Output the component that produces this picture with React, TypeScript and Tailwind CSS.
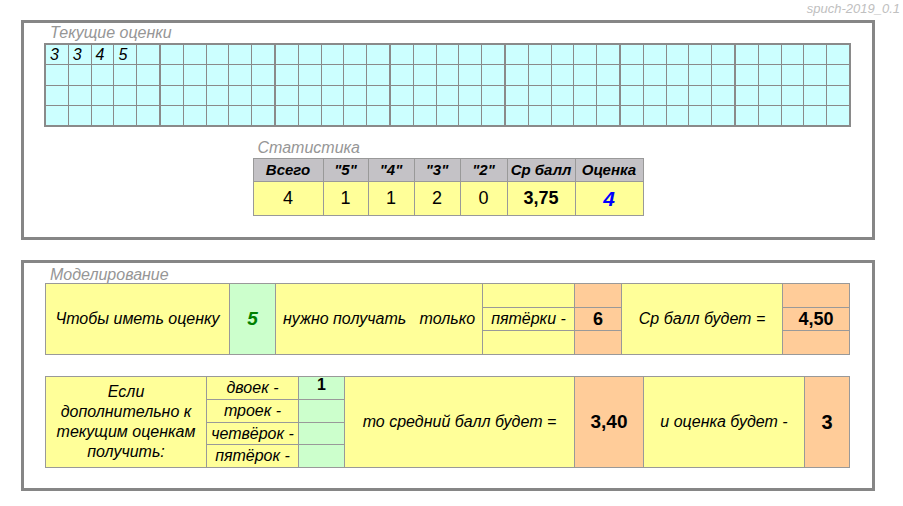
const marks = ["3", "3", "4", "5"];

function GradeGroup({ values }: { values?: string[] }) {
  return (
    <div className="grid flex-1 grid-cols-5 grid-rows-4 gap-px">
      {Array.from({ length: 20 }).map((_, i) => (
        <div key={i} className="bg-[#ccffff] pl-[4px] pt-[1px] text-[16px] italic leading-[18px] text-black">
          {values?.[i] ?? ""}
        </div>
      ))}
    </div>
  );
}

function Panel({ children, className }: { children: React.ReactNode; className: string }) {
  return (
    <div className={`ml-[21px] w-[854px] border-[3px] border-[#868686] ${className}`}>
      {children}
    </div>
  );
}

const statCols = [
  { head: "Всего", value: "4", w: "w-[69px]", cls: "text-[18px]" },
  { head: '"5"', value: "1", w: "w-[45px] border-l", cls: "text-[18px]" },
  { head: '"4"', value: "1", w: "w-[46px] border-l", cls: "text-[18px]" },
  { head: '"3"', value: "2", w: "w-[46px] border-l", cls: "text-[18px]" },
  { head: '"2"', value: "0", w: "w-[47px] border-l", cls: "text-[18px]" },
  { head: "Ср балл", value: "3,75", w: "w-[68px] border-l", cls: "text-[18px] font-bold" },
  { head: "Оценка", value: "4", w: "w-[68px] border-l", cls: "text-[21px] font-bold italic text-[#0000ff]" },
];

const subLabels = ["двоек -", "троек -", "четвёрок -", "пятёрок -"];

export default function App() {
  return (
    <div className="h-[506px] w-[903px] bg-white font-['Liberation_Sans',Arial,sans-serif] text-black">
      <div className="flex h-[20px] justify-end pr-[3px] pt-[1px] text-[13px] italic leading-[15px] text-[#c0c0c0]">
        spuch-2019_0.1
      </div>

      <Panel className="h-[220px]">
        <div className="ml-[26px] h-[20px] text-[16px] italic leading-[20px] text-[#969696]">Текущие оценки</div>
        <div className="ml-[20px] flex h-[84px] w-[807px] gap-[2px] border-2 border-[#8a8a8a] bg-[#8a8a8a]">
          <GradeGroup values={marks} />
          <GradeGroup />
          <GradeGroup />
          <GradeGroup />
          <GradeGroup />
          <GradeGroup />
          <GradeGroup />
        </div>

        <div className="mt-[11px] flex flex-col items-center">
          <div className="w-[391px]">
            <div className="h-[20px] pl-[5px] text-[16px] italic leading-[20px] text-[#969696]">Статистика</div>
            <div className="border border-[#999999]">
              <div className="flex h-[22px] bg-[#c4c2c6]">
                {statCols.map((c) => (
                  <div key={c.head} className={`${c.w} flex items-center justify-center border-[#999999] text-[15px] font-bold italic`}>
                    {c.head}
                  </div>
                ))}
              </div>
              <div className="flex h-[34px] border-t border-[#999999] bg-[#ffff99]">
                {statCols.map((c) => (
                  <div key={c.head} className={`${c.w} ${c.cls} flex items-center justify-center border-[#999999]`}>
                    {c.value}
                  </div>
                ))}
              </div>
            </div>
          </div>
        </div>
      </Panel>

      <Panel className="mt-[20px] h-[231px]">
        <div className="ml-[26px] mt-[4px] h-[16px] text-[16px] italic leading-[16px] text-[#969696]">Моделирование</div>

        {/* target grade row */}
        <div className="ml-[21px] flex h-[72px] w-[805px] border border-[#999999] bg-[#ffff99] text-[16px] italic">
          <div className="flex w-[183px] items-center justify-center">Чтобы иметь оценку</div>
          <div className="flex w-[46px] items-center justify-center border-l border-[#999999] bg-[#ccffcc] text-[19px] font-bold text-[#008000]">
            5
          </div>
          <div className="flex w-[207px] items-center justify-center whitespace-pre border-l border-[#999999]">
            нужно получать   только
          </div>
          <div className="flex w-[92px] flex-col border-l border-[#999999]">
            <div className="h-[23px]" />
            <div className="flex h-[24px] items-center justify-center border-y border-[#999999]">пятёрки -</div>
            <div className="flex-1" />
          </div>
          <div className="flex w-[47px] flex-col border-l border-[#999999] bg-[#ffcc99]">
            <div className="h-[23px]" />
            <div className="flex h-[24px] items-center justify-center border-y border-[#999999] text-[18px] font-bold not-italic">6</div>
            <div className="flex-1" />
          </div>
          <div className="flex w-[161px] items-center justify-center border-l border-[#999999]">Ср балл будет =</div>
          <div className="flex w-[67px] flex-col border-l border-[#999999] bg-[#ffcc99]">
            <div className="h-[23px]" />
            <div className="flex h-[24px] items-center justify-center border-y border-[#999999] text-[18px] font-bold not-italic">4,50</div>
            <div className="flex-1" />
          </div>
        </div>

        {/* extra grades row */}
        <div className="ml-[21px] mt-[21px] flex h-[92px] w-[805px] border border-[#999999] bg-[#ffff99] text-[16px] italic">
          <div className="flex w-[160px] items-center justify-center text-center leading-[20px]">
            Если
            <br />
            дополнительно к
            <br />
            текущим оценкам
            <br />
            получить:
          </div>
          <div className="flex w-[92px] flex-col border-l border-[#999999]">
            {subLabels.map((s, i) => (
              <div key={s} className={`flex h-[23px] items-center justify-center leading-[18px] ${i > 0 ? "border-t border-[#999999]" : ""}`}>
                {s}
              </div>
            ))}
          </div>
          <div className="flex w-[46px] flex-col border-l border-[#999999] bg-[#ccffcc]">
            {subLabels.map((s, i) => (
              <div key={s} className={`flex h-[23px] justify-center text-[16px] font-bold not-italic leading-[15px] ${i > 0 ? "border-t border-[#999999]" : ""}`}>
                {i === 0 ? "1" : ""}
              </div>
            ))}
          </div>
          <div className="flex w-[230px] items-center justify-center border-l border-[#999999]">то средний балл будет =</div>
          <div className="flex w-[69px] items-center justify-center border-l border-[#999999] bg-[#ffcc99] text-[19px] font-bold not-italic">
            3,40
          </div>
          <div className="flex w-[161px] items-center justify-center border-l border-[#999999]">и оценка будет -</div>
          <div className="flex w-[45px] items-center justify-center border-l border-[#999999] bg-[#ffcc99] text-[20px] font-bold not-italic">
            3
          </div>
        </div>
      </Panel>
    </div>
  );
}
